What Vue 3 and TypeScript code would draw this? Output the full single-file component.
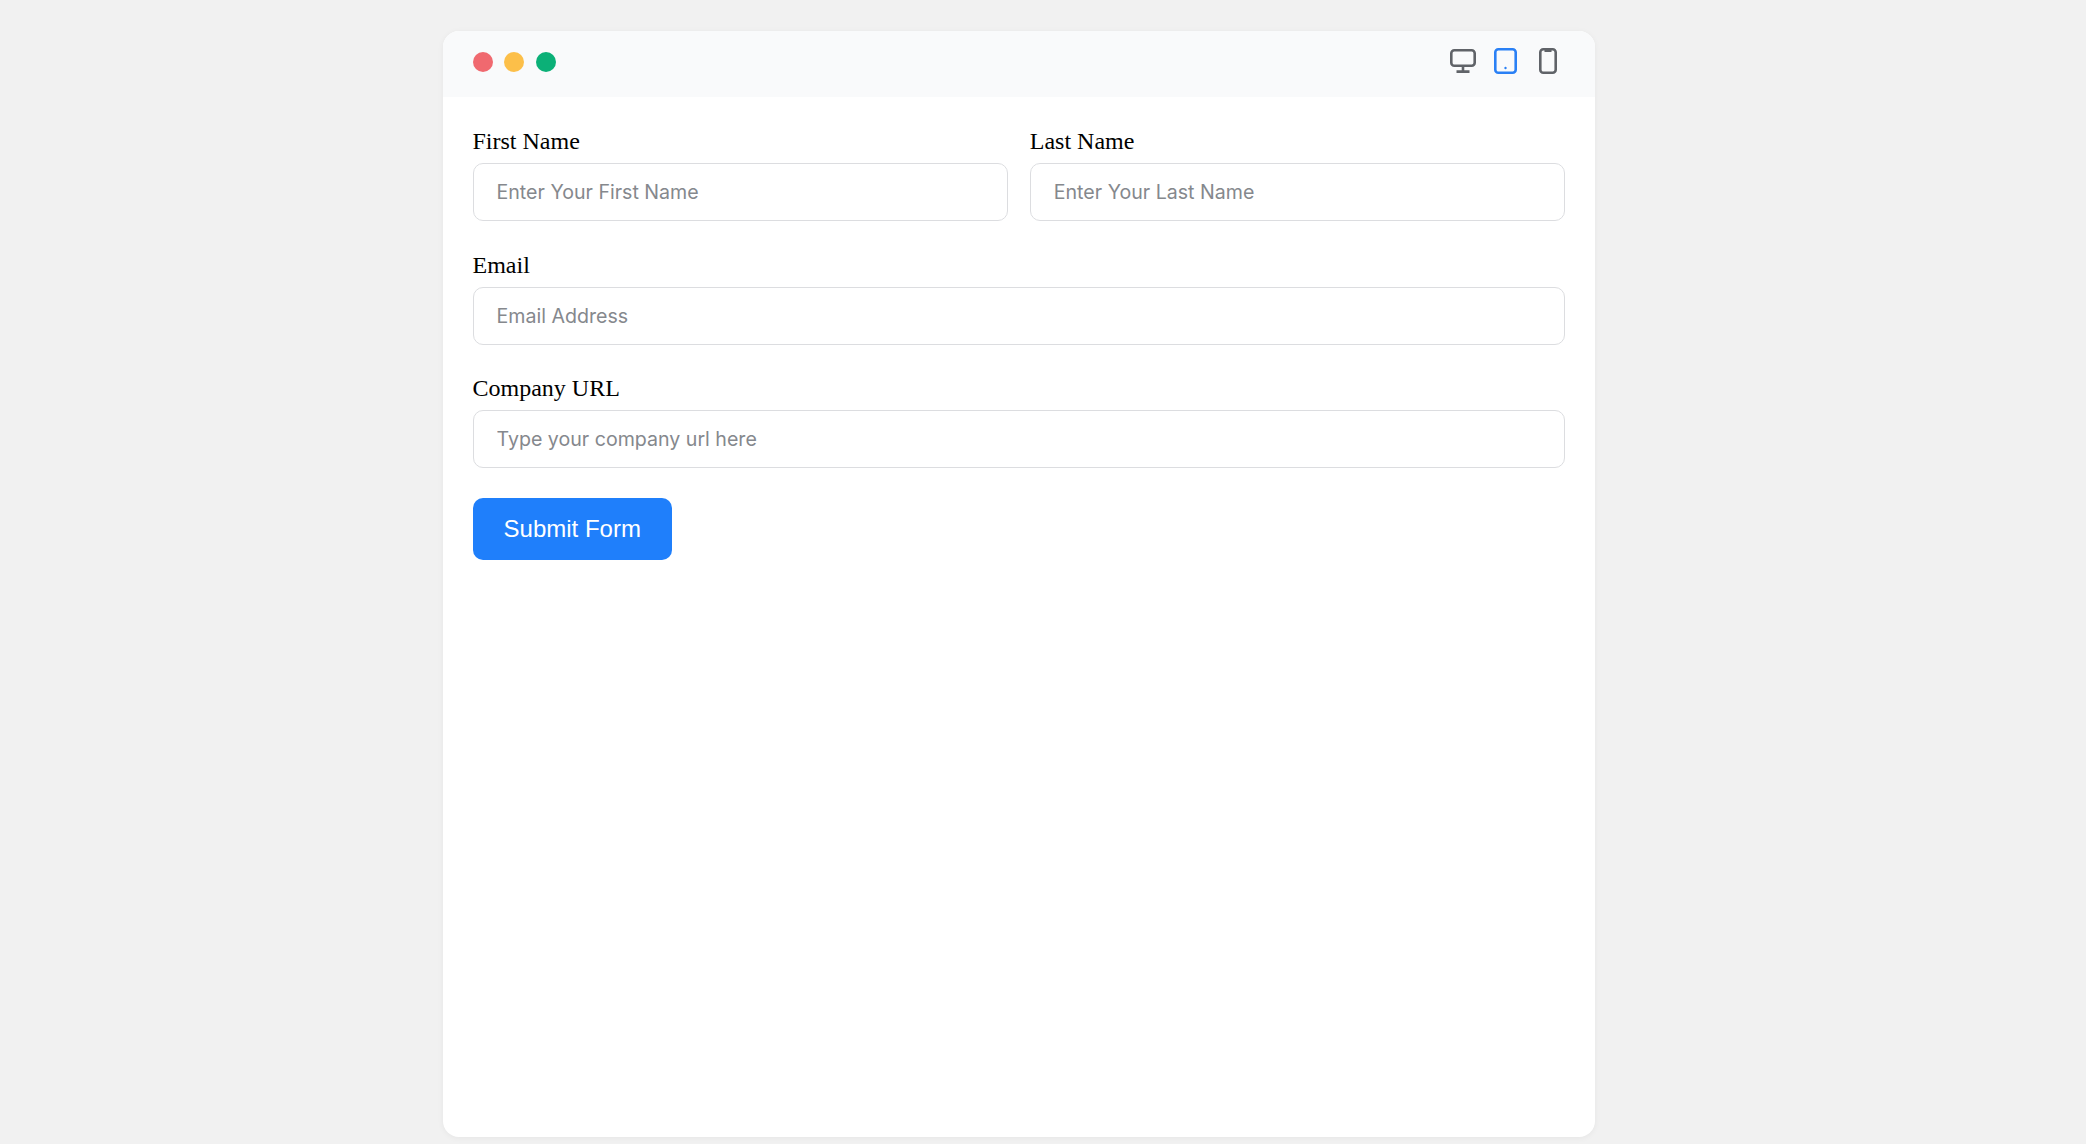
<script setup lang="ts">
const rows: { label: string; placeholder: string }[][] = [
  [
    { label: 'First Name', placeholder: 'Enter Your First Name' },
    { label: 'Last Name', placeholder: 'Enter Your Last Name' },
  ],
  [{ label: 'Email', placeholder: 'Email Address' }],
  [{ label: 'Company URL', placeholder: 'Type your company url here' }],
]
</script>

<template>
  <div class="page">
    <main class="window">
      <header class="bar">
        <div class="dots">
          <span class="dot red"></span>
          <span class="dot yellow"></span>
          <span class="dot green"></span>
        </div>
        <div class="devices">
          <svg class="ico monitor" viewBox="0 0 26 24" fill="none" stroke="#606368" stroke-width="2.6">
            <rect x="1.3" y="1.3" width="23.4" height="15.4" rx="3" />
            <path d="M13 17v5M6.5 22.6h13" />
          </svg>
          <svg class="ico tablet" viewBox="0 0 23 26" fill="none" stroke="#2a80f5" stroke-width="2.6">
            <rect x="1.3" y="1.3" width="20.4" height="23.4" rx="3" />
            <circle cx="11.5" cy="20" r="1.2" fill="#2a80f5" stroke="none" />
          </svg>
          <svg class="ico phone" viewBox="0 0 18 26" fill="none" stroke="#606368" stroke-width="2.6">
            <rect x="1.3" y="1.3" width="15.4" height="23.4" rx="3" />
            <path d="M5.5 2.6h7" stroke-width="2.8" />
          </svg>
        </div>
      </header>
      <form class="form" @submit.prevent>
        <div v-for="(row, i) in rows" :key="i" class="row">
          <label v-for="f in row" :key="f.label" class="field">
            <span class="label">{{ f.label }}</span>
            <input class="input" type="text" :placeholder="f.placeholder" />
          </label>
        </div>
        <button class="submit" type="submit">Submit Form</button>
      </form>
    </main>
  </div>
</template>

<style scoped>
.page {
  box-sizing: border-box;
  height: 1144px;
  padding: 31px 0 0 443px;
  display: flex;
  justify-content: flex-start;
  background: #f1f1f1;
}
.window {
  width: 1152px;
  height: 1105.5px;
  background: #fff;
  border-radius: 16px;
  overflow: hidden;
  box-shadow: 0 1px 6px rgba(0, 0, 0, 0.05);
}
.bar {
  height: 66px;
  box-sizing: border-box;
  padding: 0 38.5px 0 29.5px;
  display: flex;
  align-items: center;
  justify-content: space-between;
  background: #f9fafb;
}
.dots {
  display: flex;
  gap: 11.5px;
  margin-top: -3.5px;
}
.dot {
  width: 20px;
  height: 20px;
  border-radius: 50%;
}
.red { background: #f0696f; }
.yellow { background: #fcbf49; }
.green { background: #0bb077; }
.devices {
  display: flex;
  align-items: center;
  gap: 18px;
  margin-top: -6px;
}
.ico { display: block; }
.monitor { width: 26px; height: 24px; }
.tablet { width: 23px; height: 26px; }
.phone { width: 18px; height: 26px; margin-left: 3.5px; }
.form {
  padding: 30px 30px 30px 29.5px;
  display: flex;
  flex-direction: column;
  align-items: flex-start;
}
.row {
  align-self: stretch;
  display: flex;
  gap: 22px;
  margin-bottom: 29.6px;
}
.field {
  flex: 1 1 0;
  display: flex;
  flex-direction: column;
}
.label {
  font-family: "Liberation Serif", serif;
  font-size: 24px;
  line-height: 28px;
  color: #000;
  margin-bottom: 8px;
}
.input {
  box-sizing: border-box;
  height: 58px;
  width: 100%;
  padding: 0 23px;
  border: 1.5px solid #dcdde0;
  border-radius: 10px;
  background: #fff;
  font-family: Inter, sans-serif;
  font-size: 19.6px;
  outline: none;
}
.input::placeholder {
  color: #85888d;
  opacity: 1;
}
.submit {
  width: 199.5px;
  height: 62px;
  border: none;
  border-radius: 10px;
  background: #1f7ffb;
  color: #fff;
  font-family: "Liberation Sans", sans-serif;
  font-size: 24px;
}
</style>

<style>
html, body { margin: 0; background: #f1f1f1; }
</style>
